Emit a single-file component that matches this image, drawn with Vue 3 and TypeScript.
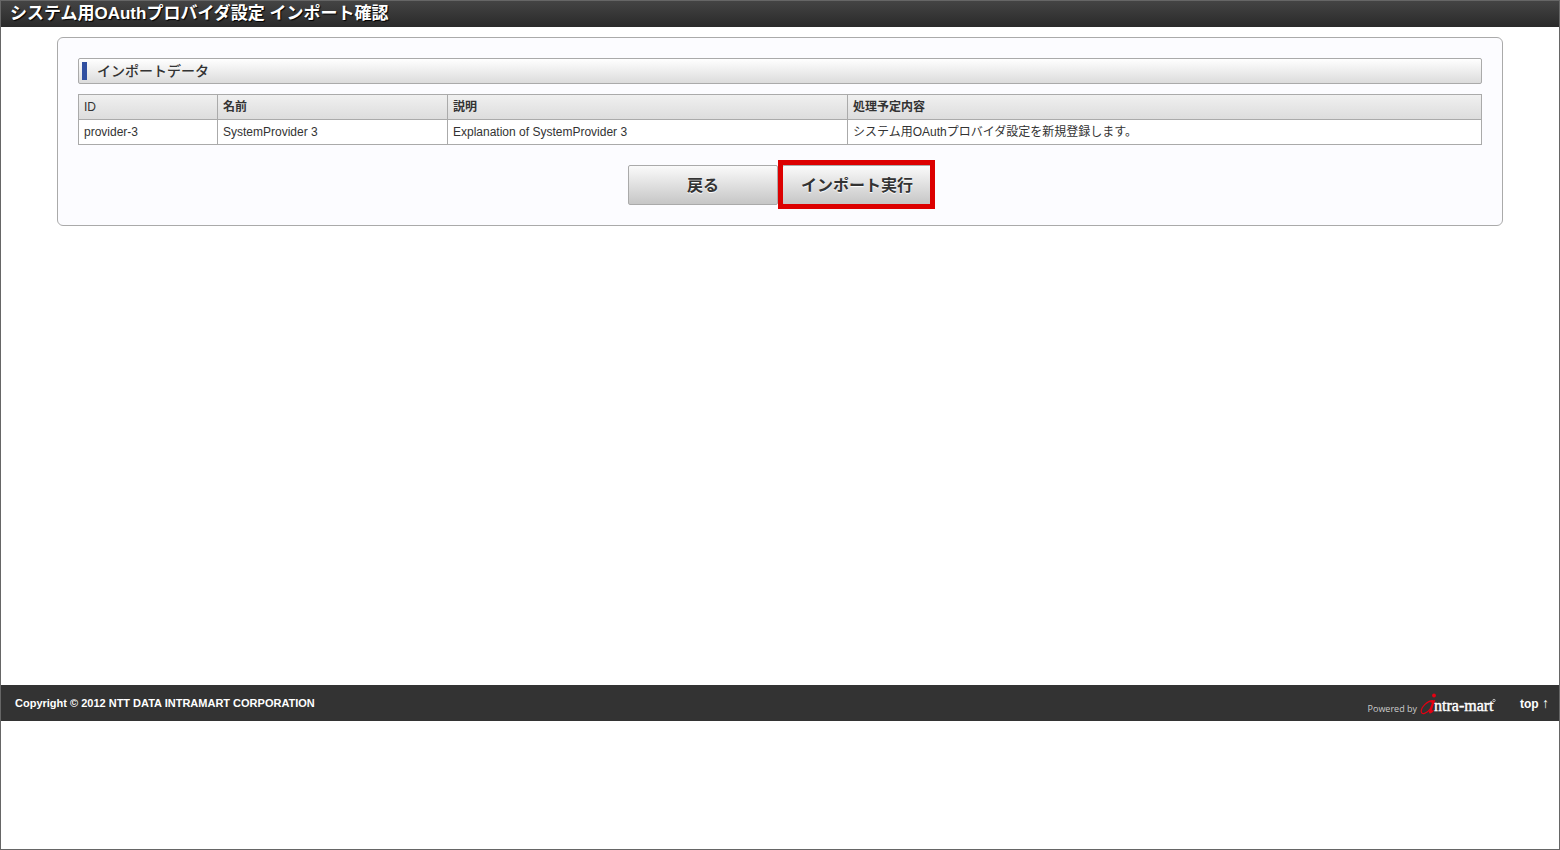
<script setup lang="ts">
interface Provider {
  id: string
  name: string
  description: string
  action: string
}

const providers: Provider[] = [
  {
    id: 'provider-3',
    name: 'SystemProvider 3',
    description: 'Explanation of SystemProvider 3',
    action: 'システム用OAuthプロバイダ設定を新規登録します。',
  },
]
</script>

<template>
  <div id="page-top" class="page">
    <header class="title-bar">
      <h1>システム用OAuthプロバイダ設定 インポート確認</h1>
    </header>

    <main class="content">
      <section class="panel">
        <h2 class="section-title">インポートデータ</h2>
        <table class="grid">
          <colgroup>
            <col class="col-id" />
            <col class="col-name" />
            <col class="col-description" />
            <col />
          </colgroup>
          <thead>
            <tr>
              <th scope="col" class="latin">ID</th>
              <th scope="col">名前</th>
              <th scope="col">説明</th>
              <th scope="col">処理予定内容</th>
            </tr>
          </thead>
          <tbody>
            <tr v-for="provider in providers" :key="provider.id">
              <td>{{ provider.id }}</td>
              <td>{{ provider.name }}</td>
              <td>{{ provider.description }}</td>
              <td>{{ provider.action }}</td>
            </tr>
          </tbody>
        </table>
        <div class="actions">
          <button type="button" class="button">戻る</button>
          <button type="button" class="button highlighted">インポート実行</button>
        </div>
      </section>
    </main>

    <footer class="footer">
      <span class="copyright">Copyright © 2012 NTT DATA INTRAMART CORPORATION</span>
      <div class="powered">
        <span class="powered-by">Powered by</span>
        <svg class="logo" width="76" height="24" viewBox="0 0 76 24" role="img" aria-label="intra-mart">
          <text class="logo-text" x="14" y="20">ntra-mart</text>
          <circle cx="74" cy="9.5" r="1.2" fill="none" stroke="#ddd" stroke-width="0.8" />
          <circle cx="14" cy="4.5" r="1.9" fill="#e60012" />
          <path
            d="M9.5 11.2 C11 10.2 13 9.2 15.3 9 L12.2 18.2 C11.8 20 13 19.8 14.6 18 C13.5 20.8 11.5 22.6 10 22.4 C8.6 22.2 8.9 20.4 9.5 18.8 L11.9 11.8 C11 11.2 10.2 11 9.5 11.2 Z"
            fill="#e60012"
          />
          <path
            d="M12.5 9.6 C7.5 9.6 1.2 16 1.2 20.2 C1.2 24.4 6.8 23 11 17"
            fill="none"
            stroke="#e60012"
            stroke-width="1.2"
            stroke-linecap="round"
          />
        </svg>
      </div>
      <a class="top-link" href="#page-top">top <span class="arrow">↑</span></a>
    </footer>
  </div>
</template>

<style>
body {
  margin: 0;
}
</style>

<style scoped>
.page {
  box-sizing: border-box;
  display: flex;
  flex-direction: column;
  min-height: 100vh;
  padding-bottom: 128px;
  border: 1px solid #666;
  background: #fff;
  color: #333;
  font-family: "Liberation Sans", Arial, "Noto Sans CJK JP", sans-serif;
  font-size: 12px;
}

.title-bar {
  height: 26px;
  padding: 0 9px;
  background: linear-gradient(#444, #2a2a2a);
}

h1 {
  margin: 0;
  color: #fff;
  font-size: 17px;
  font-weight: bold;
  line-height: 26px;
  text-shadow: 1px 1px 1px #000;
}

.content {
  flex: 1;
  padding: 10px 56px;
}

.panel {
  padding: 20px;
  border: 1px solid #aaa;
  border-radius: 6px;
  background: #fcfcff;
}

.section-title {
  display: flex;
  align-items: center;
  gap: 10px;
  box-sizing: border-box;
  height: 26px;
  margin: 0 0 10px;
  padding: 0 3px;
  border: 1px solid #aaa;
  border-radius: 2px;
  background: linear-gradient(#fff, #dcdcdc);
  font-size: 14px;
  font-weight: 500;
  line-height: 24px;
}

.section-title::before {
  content: "";
  width: 5px;
  height: 18px;
  background: #304fa0;
}

.grid {
  width: 100%;
  border-collapse: collapse;
  table-layout: fixed;
  background: #fff;
}

.col-id {
  width: 139px;
}

.col-name {
  width: 230px;
}

.col-description {
  width: 400px;
}

th,
td {
  height: 24px;
  padding: 0 5px;
  border: 1px solid #aaa;
  line-height: 24px;
  text-align: left;
}

thead tr {
  background: linear-gradient(#f0f0f0, #dcdcdc);
}

th.latin {
  font-weight: normal;
}

.actions {
  display: flex;
  justify-content: center;
  gap: 4px;
  margin-top: 20px;
}

.button {
  position: relative;
  width: 150px;
  height: 40px;
  padding: 0 0 2px;
  border: 1px solid #aaa;
  border-radius: 2px;
  background: linear-gradient(#fafafa, #c6c6c6);
  color: #333;
  font-family: inherit;
  font-size: 16px;
  font-weight: bold;
  text-shadow: 0 1px 1px #fff;
}

/* Square frame drawn over the button's edge */
.highlighted::after {
  content: "";
  position: absolute;
  inset: -6px -4px -5px -5px;
  border: 5px solid #dc0000;
}

.footer {
  display: flex;
  align-items: center;
  height: 36px;
  padding: 0 10px 0 14px;
  background: #333;
  color: #fff;
  font-size: 11px;
  font-weight: bold;
}

.copyright {
  flex: 1;
}

.powered {
  display: flex;
  align-items: center;
  gap: 3px;
  margin-right: 24px;
}

.powered-by {
  padding-top: 10px;
  color: #ccc;
  font-family: "Open Sans", sans-serif;
  font-size: 9px;
  font-weight: normal;
}

.logo {
  display: block;
}

.logo-text {
  fill: #fff;
  stroke: #fff;
  stroke-width: 0.4px;
  font-family: "Liberation Serif", "Times New Roman", serif;
  font-size: 16px;
  font-weight: normal;
}

.top-link {
  color: #fff;
  font-size: 12px;
  text-decoration: none;
}

.arrow {
  font-family: "Liberation Sans", sans-serif;
  font-size: 14px;
}
</style>
